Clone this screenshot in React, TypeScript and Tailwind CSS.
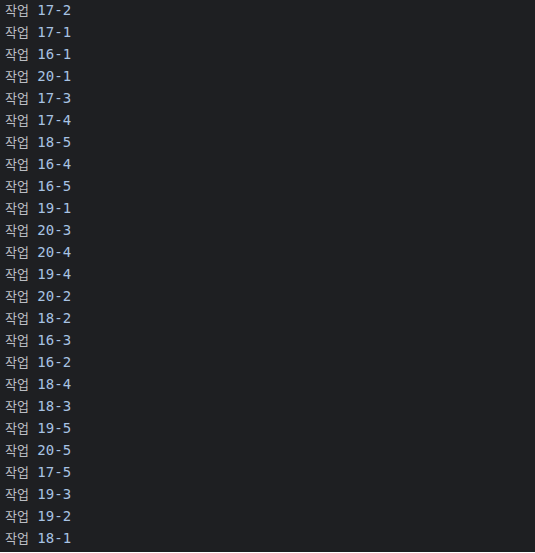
const TASKS = [
  "17-2", "17-1", "16-1", "20-1", "17-3", "17-4", "18-5", "16-4", "16-5", "19-1",
  "20-3", "20-4", "19-4", "20-2", "18-2", "16-3", "16-2", "18-4", "18-3", "19-5",
  "20-5", "17-5", "19-3", "19-2", "18-1",
]

export default function App() {
  return (
    <div className="min-h-[553px] w-full bg-[#1e1f22] px-[5px] font-['DejaVu_Sans_Mono','Noto_Sans_CJK_KR',monospace] text-[14px]">
      <div className="-mt-px">
        {TASKS.map((t) => (
          <div key={t} className="flex h-[22px] items-center whitespace-pre leading-none">
            <span className="text-[13px] text-[#bcbec4]">작업</span>
            <span className="text-[#a8c3e3]"> {t}</span>
          </div>
        ))}
      </div>
    </div>
  )
}
